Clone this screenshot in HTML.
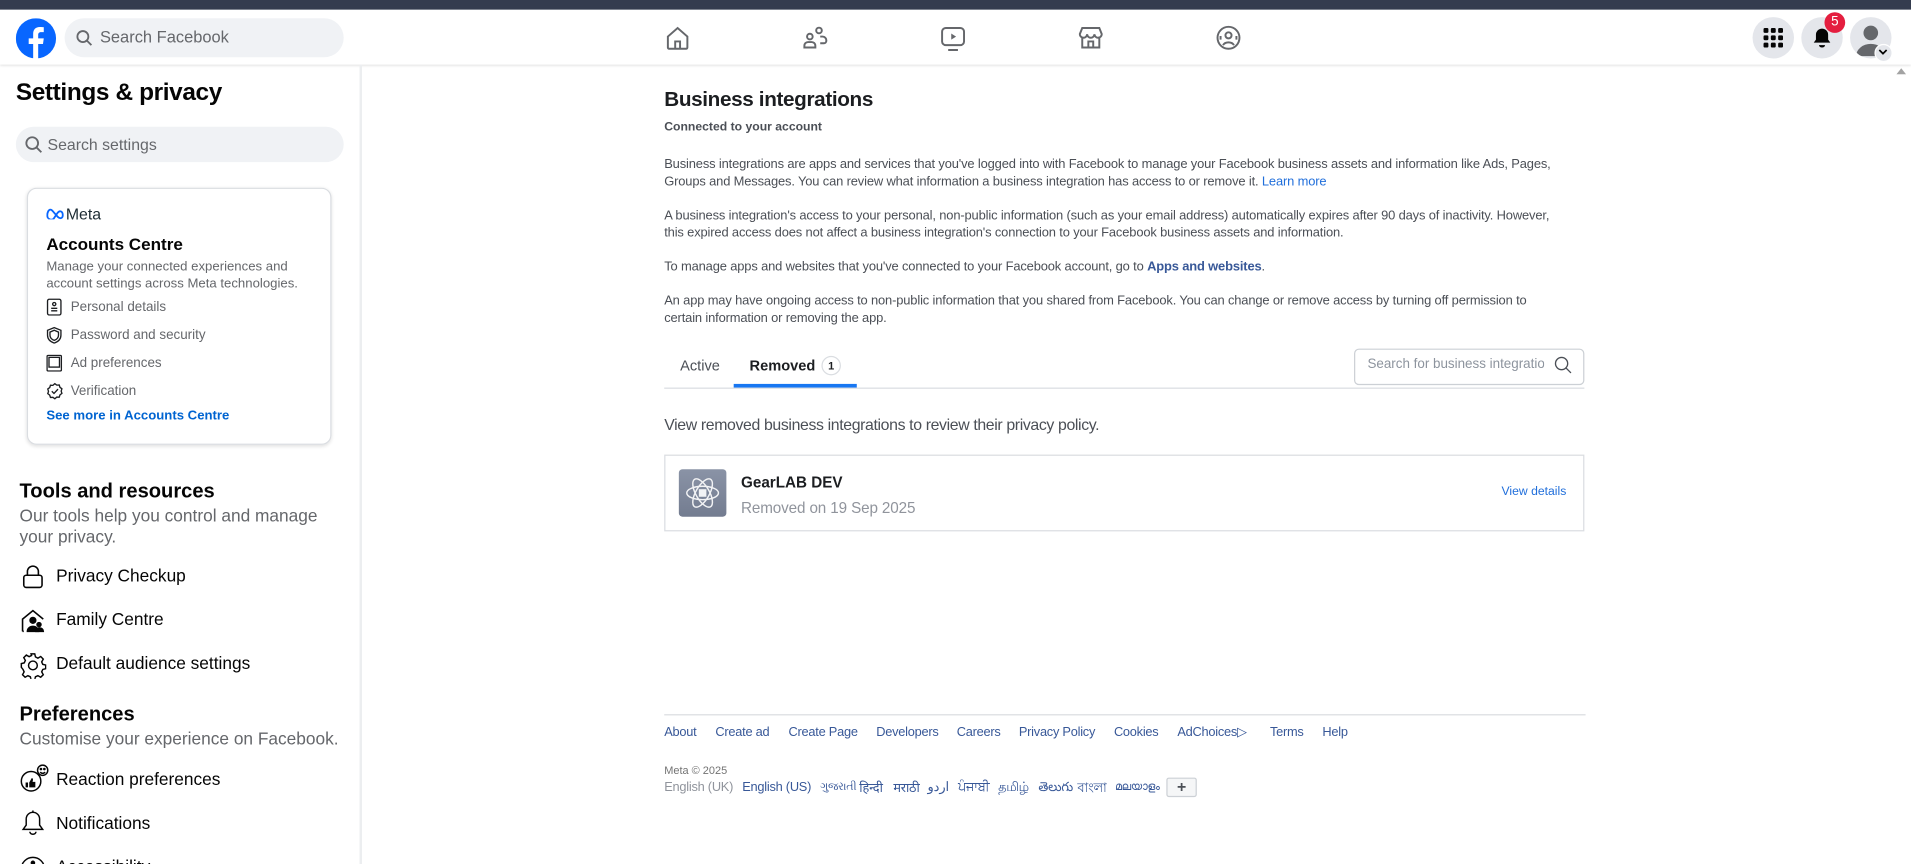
<!DOCTYPE html>
<html><head><meta charset="utf-8">
<style>
html,body{margin:0;padding:0;width:1911px;height:864px;overflow:hidden;background:#fff;}
#s{position:absolute;left:0;top:0;width:1568px;height:709px;overflow:hidden;transform:scale(1.21875);transform-origin:0 0;font-family:"Liberation Sans",Arial,sans-serif;color:#1c1e21;}
.a{position:absolute;white-space:nowrap;}
.p{font-size:10.6px;letter-spacing:-0.12px;color:#4b4f56;line-height:14px;}
.icon{position:absolute;}
.li{position:absolute;left:46px;font-size:14.2px;color:#050505;}
.ci{position:absolute;left:58px;font-size:11px;color:#65676b;}
.f{position:absolute;font-size:10.5px;color:#385898;letter-spacing:-0.2px;}
</style></head><body>
<div id="s">
<div class="a" style="left:0;top:0;width:1568px;height:8px;background:#343c4f"></div>
<div class="a" style="left:0;top:8px;width:1568px;height:45px;background:#fff;box-shadow:0 1px 2px rgba(0,0,0,.12)"></div>
<svg class="icon" style="left:13px;top:15px" width="33" height="33" viewBox="0 0 36 36"><circle cx="18" cy="18" r="18" fill="#0866ff"/><path d="M20 36V23h4.3l.7-5H20v-3c0-1.5.5-2.6 2.7-2.6H25V8c-.5-.1-2-.2-3.6-.2-3.6 0-5.9 2.200-5.900 6.100V18h-4v5h4v13z" fill="#fff"/></svg>
<div class="a" style="left:53px;top:15px;width:229px;height:32px;border-radius:16px;background:#f0f2f5"></div>
<svg class="icon" style="left:62px;top:24px" width="14" height="14" viewBox="0 0 14 14"><circle cx="6" cy="6" r="4.5" fill="none" stroke="#65676b" stroke-width="1.5"/><path d="M9.3 9.3L13 13" stroke="#65676b" stroke-width="1.5"/></svg>
<div class="a" style="left:82px;top:23px;font-size:13.5px;color:#65676b">Search Facebook</div>
<svg class="icon" style="left:545px;top:20px" width="22" height="22" viewBox="0 0 22 22" fill="none" stroke="#65676b" stroke-width="1.6"><path d="M3 10L11 3l8 7v9a1 1 0 0 1-1 1H4a1 1 0 0 1-1-1z"/><path d="M9 20v-6h4v6"/></svg>
<svg class="icon" style="left:658px;top:20px" width="22" height="22" viewBox="0 0 22 22" fill="none" stroke="#65676b" stroke-width="1.6"><circle cx="6.5" cy="10" r="2.3"/><path d="M2 19v-1.5a3 3 0 0 1 3-3h3a3 3 0 0 1 3 3V19z"/><circle cx="14" cy="5" r="2.3"/><path d="M15 10h2a3 3 0 0 1 3 3v.5a2 2 0 0 1-2 2h-3"/></svg>
<svg class="icon" style="left:771px;top:20px" width="22" height="22" viewBox="0 0 22 22" fill="none" stroke="#65676b" stroke-width="1.6"><rect x="2" y="3" width="18" height="14" rx="3"/><path d="M7 21h8"/><path d="M9.5 7.5v5l4-2.5z" fill="#65676b" stroke="none"/></svg>
<svg class="icon" style="left:884px;top:20px" width="22" height="22" viewBox="0 0 22 22" fill="none" stroke="#65676b" stroke-width="1.6"><path d="M4 3h14l2 5a3 3 0 0 1-6 0 3 3 0 0 1-6 0 3 3 0 0 1-6 0z"/><path d="M4 10v9h14v-9"/><path d="M9 19v-5h4v5"/></svg>
<svg class="icon" style="left:997px;top:20px" width="22" height="22" viewBox="0 0 22 22" fill="none" stroke="#65676b" stroke-width="1.6"><circle cx="11" cy="11" r="9"/><circle cx="11" cy="9" r="2.5"/><path d="M6.5 17a5 4 0 0 1 9 0"/><path d="M4.5 9.5v3M17.5 9.5v3"/></svg>
<div class="a" style="left:1438px;top:14px;width:34px;height:34px;border-radius:50%;background:#e4e6eb"></div>
<svg class="icon" style="left:1447px;top:23px" width="16" height="16" viewBox="0 0 16 16" fill="#050505"><rect x="0" y="0" width="4" height="4" rx="1"/><rect x="6" y="0" width="4" height="4" rx="1"/><rect x="12" y="0" width="4" height="4" rx="1"/><rect x="0" y="6" width="4" height="4" rx="1"/><rect x="6" y="6" width="4" height="4" rx="1"/><rect x="12" y="6" width="4" height="4" rx="1"/><rect x="0" y="12" width="4" height="4" rx="1"/><rect x="6" y="12" width="4" height="4" rx="1"/><rect x="12" y="12" width="4" height="4" rx="1"/></svg>
<div class="a" style="left:1478px;top:14px;width:34px;height:34px;border-radius:50%;background:#e4e6eb"></div>
<svg class="icon" style="left:1486px;top:22px" width="18" height="18" viewBox="0 0 18 18" fill="#050505"><path d="M9 1.5a5 5 0 0 1 5 5v4l1.8 2.5H2.2L4 10.5v-4a5 5 0 0 1 5-5z"/><path d="M6.5 15h5a2.5 2 0 0 1-5 0z"/></svg>
<div class="a" style="left:1497px;top:10px;width:17px;height:17px;border-radius:50%;background:#e41e3f;color:#fff;font-size:11px;text-align:center;line-height:17px">5</div>
<div class="a" style="left:1518px;top:14px;width:34px;height:34px;border-radius:50%;background:#e4e6eb;overflow:hidden"><svg width="34" height="34" viewBox="0 0 34 34"><circle cx="17" cy="13" r="6" fill="#65676b"/><path d="M5 32a12 10 0 0 1 24 0z" fill="#65676b"/></svg></div>
<div class="a" style="left:1538px;top:36px;width:13px;height:13px;border-radius:50%;background:#e4e6eb;border:1px solid #fff"></div>
<svg class="icon" style="left:1541px;top:40px" width="8" height="6" viewBox="0 0 8 6"><path d="M1 1l3 3 3-3" fill="none" stroke="#050505" stroke-width="1.4"/></svg>
<svg class="icon" style="left:1556px;top:55px" width="8" height="6"><path d="M0 6L4 1 8 6z" fill="#a3a3a3"/></svg>
<div class="a" style="left:295px;top:53px;width:2px;height:656px;background:#eceef0"></div>
<div class="a" style="left:13px;top:65px;font-size:20px;font-weight:bold;color:#050505;letter-spacing:-0.3px">Settings &amp; privacy</div>
<div class="a" style="left:13px;top:104px;width:269px;height:29px;border-radius:15px;background:#f0f2f5"></div>
<svg class="icon" style="left:20px;top:111px" width="15" height="15" viewBox="0 0 14 14"><circle cx="6" cy="6" r="4.5" fill="none" stroke="#65676b" stroke-width="1.4"/><path d="M9.3 9.3L13 13" stroke="#65676b" stroke-width="1.4"/></svg>
<div class="a" style="left:39px;top:111px;font-size:13px;color:#65676b">Search settings</div>
<div class="a" style="left:22px;top:154px;width:248px;height:209px;border:1px solid #dadde1;border-radius:8px;box-shadow:0 1px 3px rgba(0,0,0,.12)"></div>
<svg class="icon" style="left:38px;top:171px" width="15" height="9" viewBox="0 0 30 18"><path d="M4 16C1 16 1 9 3 5s5-4 8 0l8 9c3 3 8 3 8-3s-5-9-9-3l-6 9C9 20 4 18 4 16" fill="none" stroke="#0866ff" stroke-width="3"/></svg>
<div class="a" style="left:54px;top:168px;font-size:13px;color:#1c2b33">Meta</div>
<div class="a" style="left:38px;top:192px;font-size:14px;font-weight:bold;color:#050505">Accounts Centre</div>
<div class="a" style="left:38px;top:212px;font-size:10.8px;color:#65676b;line-height:14px">Manage your connected experiences and<br>account settings across Meta technologies.</div>
<svg class="icon" style="left:38px;top:245px" width="13" height="14" viewBox="0 0 13 14" fill="none" stroke="#1c1e21" stroke-width="1.1"><rect x="1" y="0.5" width="11" height="13" rx="1.5"/><circle cx="6.5" cy="4.5" r="1.3"/><path d="M4 8h5M4 10h5"/></svg>
<div class="ci" style="top:246px">Personal details</div>
<svg class="icon" style="left:38px;top:268px" width="13" height="14" viewBox="0 0 13 14" fill="none" stroke="#1c1e21" stroke-width="1.1"><path d="M6.5 0.8L12 3v4c0 3.5-2.5 5.5-5.5 6.5C3.5 12.5 1 10.5 1 7V3z"/><path d="M6.5 3L10 4.5V7c0 2.3-1.5 3.6-3.5 4.3C4.5 10.6 3 9.3 3 7V4.5z"/></svg>
<div class="ci" style="top:269px">Password and security</div>
<svg class="icon" style="left:38px;top:291px" width="13" height="14" viewBox="0 0 13 14" fill="none" stroke="#1c1e21" stroke-width="1.1"><rect x="0.6" y="0.6" width="11.8" height="12.8" rx="1"/><rect x="2.2" y="2.2" width="8.6" height="8" /></svg>
<div class="ci" style="top:292px">Ad preferences</div>
<svg class="icon" style="left:38px;top:314px" width="14" height="14" viewBox="0 0 14 14" fill="none" stroke="#1c1e21" stroke-width="1.1"><path d="M7 .8l1.6 1.2 2-.1.6 1.9 1.6 1.2-.6 1.9.6 1.9-1.6 1.2-.6 1.9-2-.1L7 13.2l-1.6-1.2-2 .1-.6-1.9L1.2 9l.6-1.9-.6-1.9 1.6-1.2.6-1.9 2 .1z"/><path d="M4.5 7l1.8 1.8L9.6 5.3"/></svg>
<div class="ci" style="top:315px">Verification</div>
<div class="a" style="left:38px;top:335px;font-size:10.8px;font-weight:bold;color:#0064d1">See more in Accounts Centre</div>

<div class="a" style="left:16px;top:394px;font-size:16.5px;font-weight:bold;color:#050505">Tools and resources</div>
<div class="a" style="left:16px;top:416px;font-size:14.2px;color:#65676b;line-height:17px">Our tools help you control and manage<br>your privacy.</div>
<svg class="icon" style="left:17px;top:463px" width="20" height="20" viewBox="0 0 20 20" fill="none" stroke="#050505" stroke-width="1.3"><rect x="2.5" y="9" width="15" height="10" rx="2"/><path d="M5.5 9V6a4.5 4.5 0 0 1 9 0v3"/></svg>
<div class="li" style="top:465px">Privacy Checkup</div>
<svg class="icon" style="left:16px;top:499px" width="22" height="22" viewBox="0 0 22 22" fill="none" stroke="#050505" stroke-width="1.3"><path d="M2.5 19V9L11 2l8.5 7"/><path d="M2.5 19h1"/><circle cx="11" cy="10" r="2.3" fill="#050505"/><path d="M6.5 19a4.5 4 0 0 1 9 0z" fill="#050505"/><circle cx="16" cy="13.5" r="1.6" fill="#050505"/><path d="M13.5 19a2.8 2.5 0 0 1 6 0z" fill="#050505"/></svg>
<div class="li" style="top:501px">Family Centre</div>
<svg class="icon" style="left:16px;top:535px" width="22" height="22" viewBox="0 0 22 22" fill="none" stroke="#050505" stroke-width="1.2"><path d="M9.5 1.5h3l.6 2.5 2 1 2.3-1.3 2.1 2.1-1.3 2.3.9 2 2.4.6v3l-2.4.6-.9 2 1.3 2.3-2.1 2.1-2.3-1.3-2 .9-.6 2.4h-3l-.6-2.4-2-.9-2.3 1.3-2.1-2.1 1.3-2.3-.9-2L1.5 12.5v-3l2.4-.6.9-2-1.3-2.3 2.1-2.1 2.3 1.3 2-1z"/><circle cx="11" cy="11" r="3.6"/></svg>
<div class="li" style="top:537px">Default audience settings</div>
<div class="a" style="left:16px;top:577px;font-size:16.5px;font-weight:bold;color:#050505">Preferences</div>
<div class="a" style="left:16px;top:599px;font-size:14.2px;color:#65676b">Customise your experience on Facebook.</div>
<svg class="icon" style="left:16px;top:627px" width="24" height="24" viewBox="0 0 24 24" fill="none" stroke="#050505" stroke-width="1.2"><circle cx="9.5" cy="14" r="8"/><path d="M5 15h2v4H5zM8 19v-4l2-3.5c1 0 1.2.8 1 1.8l-.3 1.2h2.3v4.5z" fill="#050505" stroke="none"/><circle cx="19" cy="5" r="4.2" fill="#fff"/><path d="M17 6.5a2.3 2 0 0 0 4 0" /><circle cx="17.6" cy="4" r=".5" fill="#050505"/><circle cx="20.4" cy="4" r=".5" fill="#050505"/></svg>
<div class="li" style="top:632px">Reaction preferences</div>
<svg class="icon" style="left:16px;top:664px" width="22" height="22" viewBox="0 0 22 22" fill="none" stroke="#050505" stroke-width="1.2"><path d="M11 2.5a5.5 5.5 0 0 1 5.5 5.5v5l2.5 3.5H3l2.5-3.5V8A5.5 5.5 0 0 1 11 2.5z"/><path d="M8.5 18.5a2.5 2 0 0 0 5 0"/><path d="M11 1v1.5"/></svg>
<div class="li" style="top:668px">Notifications</div>
<svg class="icon" style="left:16px;top:702px" width="22" height="22" viewBox="0 0 22 22" fill="none" stroke="#050505" stroke-width="1.2"><circle cx="11" cy="11" r="9.5"/><circle cx="11" cy="6" r="1.3" fill="#050505"/><path d="M5.5 8.5h11M11 8.5v5l-3 4M11 13.5l3 4"/></svg>
<div class="li" style="top:704px">Accessibility</div>

<div class="a" style="left:545px;top:72px;font-size:17px;font-weight:bold;color:#1c1e21;letter-spacing:-0.3px">Business integrations</div>
<div class="a" style="left:545px;top:99px;font-size:10px;font-weight:bold;color:#4b4f56">Connected to your account</div>
<div class="a p" style="left:545px;top:128px">Business integrations are apps and services that you've logged into with Facebook to manage your Facebook business assets and information like Ads, Pages,<br>Groups and Messages. You can review what information a business integration has access to or remove it. <span style="color:#216fdb">Learn more</span></div>
<div class="a p" style="left:545px;top:170px">A business integration's access to your personal, non-public information (such as your email address) automatically expires after 90 days of inactivity. However,<br>this expired access does not affect a business integration's connection to your Facebook business assets and information.</div>
<div class="a p" style="left:545px;top:212px">To manage apps and websites that you've connected to your Facebook account, go to <b style="color:#385898">Apps and websites</b>.</div>
<div class="a p" style="left:545px;top:240px">An app may have ongoing access to non-public information that you shared from Facebook. You can change or remove access by turning off permission to<br>certain information or removing the app.</div>
<div class="a" style="left:558px;top:293px;font-size:12px;color:#4b4f56">Active</div>
<div class="a" style="left:615px;top:293px;font-size:12px;font-weight:bold;color:#1c1e21">Removed</div>
<div class="a" style="left:674px;top:292px;width:14px;height:14px;border-radius:50%;border:1px solid #dadde1;font-size:9px;font-weight:bold;text-align:center;line-height:14px">1</div>
<div class="a" style="left:545px;top:318px;width:755px;height:1px;background:#dadde1"></div>
<div class="a" style="left:602px;top:315px;width:101px;height:3px;background:#1877f2"></div>
<div class="a" style="left:1111px;top:286px;width:187px;height:28px;border:1px solid #ccd0d5;border-radius:4px"></div>
<div class="a" style="left:1122px;top:293px;font-size:11px;color:#8d949e;width:145px;overflow:hidden">Search for business integrations</div>
<svg class="icon" style="left:1275px;top:292px" width="15" height="15" viewBox="0 0 15 15"><circle cx="6.3" cy="6.3" r="5" fill="none" stroke="#4b4f56" stroke-width="1.1"/><path d="M10 10l4 4" stroke="#4b4f56" stroke-width="1.1"/></svg>
<div class="a" style="left:545px;top:341px;font-size:13px;color:#4b4f56;letter-spacing:-0.3px">View removed business integrations to review their privacy policy.</div>
<div class="a" style="left:545px;top:373px;width:753px;height:61px;border:1px solid #dadde1"></div>
<div class="a" style="left:557px;top:385px;width:39px;height:39px;border-radius:3px;background:linear-gradient(#8a93a6,#737c90)"></div>
<svg class="icon" style="left:560px;top:388px" width="33" height="33" viewBox="0 0 33 33" fill="none" stroke="#fff" stroke-width="1.2" opacity=".9"><ellipse cx="16.5" cy="16.5" rx="13" ry="5.5"/><ellipse cx="16.5" cy="16.5" rx="13" ry="5.5" transform="rotate(60 16.5 16.5)"/><ellipse cx="16.5" cy="16.5" rx="13" ry="5.5" transform="rotate(-60 16.5 16.5)"/><rect x="14" y="14" width="5" height="5" fill="#fff"/></svg>
<div class="a" style="left:608px;top:389px;font-size:12.5px;font-weight:bold;color:#1c1e21">GearLAB DEV</div>
<div class="a" style="left:608px;top:410px;font-size:12.5px;color:#90949c;letter-spacing:-0.1px">Removed on 19 Sep 2025</div>
<div class="a" style="left:1232px;top:398px;font-size:10px;color:#216fdb">View details</div>

<div class="a" style="left:545px;top:586px;width:756px;height:1px;background:#dadde1"></div>
<div class="f" style="left:545px;top:595px">About</div>
<div class="f" style="left:587px;top:595px">Create ad</div>
<div class="f" style="left:647px;top:595px">Create Page</div>
<div class="f" style="left:719px;top:595px">Developers</div>
<div class="f" style="left:785px;top:595px">Careers</div>
<div class="f" style="left:836px;top:595px">Privacy Policy</div>
<div class="f" style="left:914px;top:595px">Cookies</div>
<div class="f" style="left:966px;top:595px">AdChoices▷</div>
<div class="f" style="left:1042px;top:595px">Terms</div>
<div class="f" style="left:1085px;top:595px">Help</div>
<div class="a" style="left:545px;top:627px;font-size:9px;color:#737373">Meta © 2025</div>
<div class="f" style="left:545px;top:640px;color:#90949c">English (UK)</div>
<div class="f" style="left:609px;top:640px">English (US)</div>
<div class="f" style="left:673px;top:640px;font-size:9px">ગુજરાતી</div>
<div class="f" style="left:705px;top:640px">हिन्दी</div>
<div class="f" style="left:733px;top:640px">मराठी</div>
<div class="f" style="left:761px;top:640px">اردو</div>
<div class="f" style="left:786px;top:640px">ਪੰਜਾਬੀ</div>
<div class="f" style="left:819px;top:640px">தமிழ்</div>
<div class="f" style="left:852px;top:640px">తెలుగు</div>
<div class="f" style="left:884px;top:640px">বাংলা</div>
<div class="f" style="left:915px;top:640px;font-size:9px">മലയാളം</div>
<div class="a" style="left:957px;top:638px;width:23px;height:14px;border:1px solid #ccd0d5;border-radius:2px;background:#f5f6f7;text-align:center;font-size:13px;line-height:14px;color:#4b4f56;font-weight:bold">+</div>
</div>
</body></html>
